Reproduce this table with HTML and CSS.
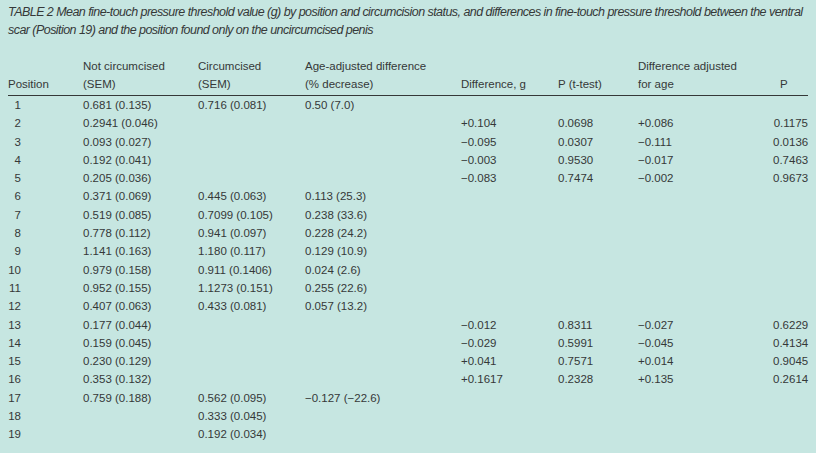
FILE: index.html
```html
<!DOCTYPE html>
<html>
<head>
<meta charset="utf-8">
<link rel="stylesheet" href="styles.css">
</head>
<body>
<div class="page">
  <p class="caption">TABLE 2 Mean fine-touch pressure threshold value (g) by position and circumcision status, and differences in fine-touch pressure threshold between the ventral scar (Position 19) and the position found only on the uncircumcised penis</p>
  <table class="data">
    <colgroup>
      <col class="c1"><col class="c2"><col class="c3"><col class="c4"><col class="c5"><col class="c6"><col class="c7"><col class="c8">
    </colgroup>
    <thead>
      <tr>
        <th>Position</th>
        <th>Not circumcised<br>(SEM)</th>
        <th>Circumcised<br>(SEM)</th>
        <th>Age-adjusted difference<br>(% decrease)</th>
        <th>Difference, g</th>
        <th>P (t-test)</th>
        <th>Difference adjusted<br>for age</th>
        <th class="plast">P</th>
      </tr>
    </thead>
    <tbody>
      <tr><td><span class="pos">1</span></td><td>0.681 (0.135)</td><td>0.716 (0.081)</td><td>0.50 (7.0)</td><td></td><td></td><td></td><td class="r"></td></tr>
      <tr><td><span class="pos">2</span></td><td>0.2941 (0.046)</td><td></td><td></td><td>+0.104</td><td>0.0698</td><td>+0.086</td><td class="r">0.1175</td></tr>
      <tr><td><span class="pos">3</span></td><td>0.093 (0.027)</td><td></td><td></td><td>−0.095</td><td>0.0307</td><td>−0.111</td><td class="r">0.0136</td></tr>
      <tr><td><span class="pos">4</span></td><td>0.192 (0.041)</td><td></td><td></td><td>−0.003</td><td>0.9530</td><td>−0.017</td><td class="r">0.7463</td></tr>
      <tr><td><span class="pos">5</span></td><td>0.205 (0.036)</td><td></td><td></td><td>−0.083</td><td>0.7474</td><td>−0.002</td><td class="r">0.9673</td></tr>
      <tr><td><span class="pos">6</span></td><td>0.371 (0.069)</td><td>0.445 (0.063)</td><td>0.113 (25.3)</td><td></td><td></td><td></td><td class="r"></td></tr>
      <tr><td><span class="pos">7</span></td><td>0.519 (0.085)</td><td>0.7099 (0.105)</td><td>0.238 (33.6)</td><td></td><td></td><td></td><td class="r"></td></tr>
      <tr><td><span class="pos">8</span></td><td>0.778 (0.112)</td><td>0.941 (0.097)</td><td>0.228 (24.2)</td><td></td><td></td><td></td><td class="r"></td></tr>
      <tr><td><span class="pos">9</span></td><td>1.141 (0.163)</td><td>1.180 (0.117)</td><td>0.129 (10.9)</td><td></td><td></td><td></td><td class="r"></td></tr>
      <tr><td><span class="pos">10</span></td><td>0.979 (0.158)</td><td>0.911 (0.1406)</td><td>0.024 (2.6)</td><td></td><td></td><td></td><td class="r"></td></tr>
      <tr><td><span class="pos">11</span></td><td>0.952 (0.155)</td><td>1.1273 (0.151)</td><td>0.255 (22.6)</td><td></td><td></td><td></td><td class="r"></td></tr>
      <tr><td><span class="pos">12</span></td><td>0.407 (0.063)</td><td>0.433 (0.081)</td><td>0.057 (13.2)</td><td></td><td></td><td></td><td class="r"></td></tr>
      <tr><td><span class="pos">13</span></td><td>0.177 (0.044)</td><td></td><td></td><td>−0.012</td><td>0.8311</td><td>−0.027</td><td class="r">0.6229</td></tr>
      <tr><td><span class="pos">14</span></td><td>0.159 (0.045)</td><td></td><td></td><td>−0.029</td><td>0.5991</td><td>−0.045</td><td class="r">0.4134</td></tr>
      <tr><td><span class="pos">15</span></td><td>0.230 (0.129)</td><td></td><td></td><td>+0.041</td><td>0.7571</td><td>+0.014</td><td class="r">0.9045</td></tr>
      <tr><td><span class="pos">16</span></td><td>0.353 (0.132)</td><td></td><td></td><td>+0.1617</td><td>0.2328</td><td>+0.135</td><td class="r">0.2614</td></tr>
      <tr><td><span class="pos">17</span></td><td>0.759 (0.188)</td><td>0.562 (0.095)</td><td>−0.127 (−22.6)</td><td></td><td></td><td></td><td class="r"></td></tr>
      <tr><td><span class="pos">18</span></td><td></td><td>0.333 (0.045)</td><td></td><td></td><td></td><td></td><td class="r"></td></tr>
      <tr><td><span class="pos">19</span></td><td></td><td>0.192 (0.034)</td><td></td><td></td><td></td><td></td><td class="r"></td></tr>
    </tbody>
  </table>
</div>
</body>
</html>
```
FILE: styles.css
```css
html, body {
  margin: 0;
  padding: 0;
  background: #c6e6e1;
}
.page {
  width: 816px;
  height: 453px;
  box-sizing: border-box;
  padding: 3px 8px 0 8px;
  background: #c6e6e1;
  color: #353838;
  font-family: "Liberation Sans", Arial, sans-serif;
  overflow: hidden;
}
.caption {
  margin: 0 0 18px 0;
  font-style: italic;
  font-size: 12.5px;
  line-height: 18px;
  letter-spacing: -0.55px;
  width: 800px;
}
.data {
  border-collapse: collapse;
  table-layout: fixed;
  width: 800px;
  font-size: 11.5px;
}
.c1 { width: 75px; }
.c2 { width: 115px; }
.c3 { width: 107px; }
.c4 { width: 156px; }
.c5 { width: 97px; }
.c6 { width: 80px; }
.c7 { width: 135px; }
.c8 { width: 35px; }
.data th {
  font-weight: normal;
  text-align: left;
  vertical-align: bottom;
  line-height: 18px;
  padding: 0 0 2px 0;
  border-bottom: 1px solid #353838;
  white-space: nowrap;
}
.data th.plast {
  padding-left: 7px;
}
.data td {
  padding: 0;
  line-height: 18.3px;
  height: 18.3px;
  white-space: nowrap;
}
.data td.r {
  text-align: right;
}
.pos {
  display: inline-block;
  width: 13px;
  text-align: right;
}
```
